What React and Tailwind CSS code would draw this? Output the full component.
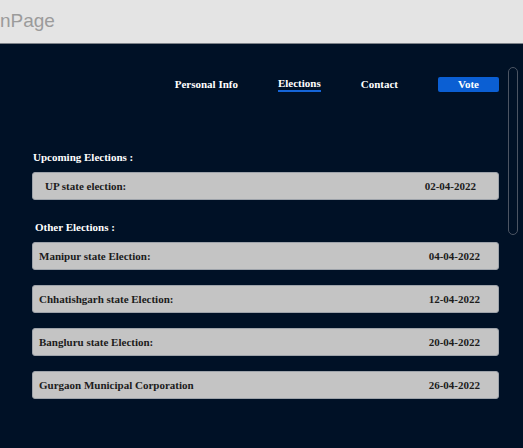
import React from 'react';

const serif = { fontFamily: '"Liberation Serif", "DejaVu Serif", serif' };

const navItems = ['Personal Info', 'Elections', 'Contact'];

const others = [
    { name: 'Manipur state Election:', date: '04-04-2022' },
    { name: 'Chhatishgarh state Election:', date: '12-04-2022' },
    { name: 'Bangluru state Election:', date: '20-04-2022' },
    { name: 'Gurgaon Municipal Corporation', date: '26-04-2022' },
];

const ElectionRow = ({ name, date, inset }) => (
    <div
        className={`flex h-[28px] items-center justify-between rounded-[3px] border border-[#9ea3aa] bg-[#c4c4c4] text-[11px] font-bold text-[#1b1b1b] ${inset ? 'pl-[12px] pr-[22px]' : 'pl-[6px] pr-[18px]'}`}
    >
        <span>{name}</span>
        <span>{date}</span>
    </div>
);

const App = () => {
    return (
        <div className="relative flex h-[448px] w-[523px] flex-col overflow-hidden bg-[#001126]" style={serif}>
            {/* title strip */}
            <div className="flex h-[44px] items-center border-b border-[#7d8289] bg-[#e4e4e4]">
                <span className="text-[19px] text-[#9b9b9b]" style={{ fontFamily: '"Liberation Sans", Arial, sans-serif' }}>
                    nPage
                </span>
            </div>

            {/* nav */}
            <nav className="mt-[32px] flex items-center justify-end gap-[40px] pr-[24px] text-[11px] font-bold text-white">
                {navItems.map((item) => (
                    <span
                        key={item}
                        className={item === 'Elections' ? 'border-b-2 border-[#1565d8] leading-[14px]' : 'leading-[14px]'}
                    >
                        {item}
                    </span>
                ))}
                <button className="h-[15px] w-[61px] rounded-[2px] bg-[#0b5fd3] text-[11px] font-bold leading-[15px] text-white">
                    Vote
                </button>
            </nav>

            {/* elections */}
            <section className="mt-[58px] flex flex-col pl-[32px] pr-[24px] text-white">
                <h2 className="pl-[1px] text-[11px] font-bold leading-[14px]">Upcoming Elections :</h2>
                <div className="mt-[8px]">
                    <ElectionRow name="UP state election:" date="02-04-2022" inset />
                </div>
                <h2 className="mt-[20px] pl-[3px] text-[11px] font-bold leading-[14px]">Other Elections :</h2>
                <div className="mt-[8px] flex flex-col gap-[15px]">
                    {others.map((e) => (
                        <ElectionRow key={e.name} name={e.name} date={e.date} />
                    ))}
                </div>
            </section>

            {/* overlay scrollbar */}
            <div className="absolute left-[508px] top-[67px] h-[168px] w-[10px] rounded-full border-[1.5px] border-[#4c5563]" />
        </div>
    );
};

export default App;
